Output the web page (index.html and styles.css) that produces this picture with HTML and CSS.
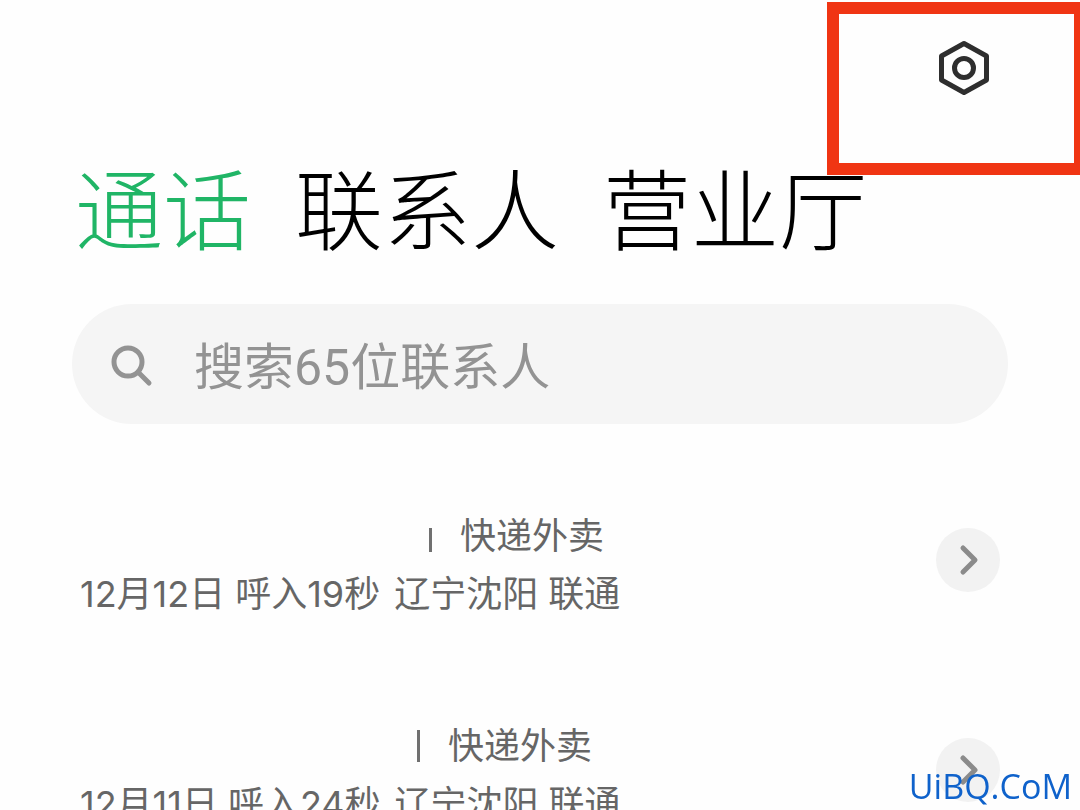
FILE: index.html
```
<!doctype html>
<html lang="zh-CN">
<head>
    <meta charset="UTF-8">
    <meta name="viewport" content="width=device-width, initial-scale=1.0">
    <title>通话</title>
    <link rel="stylesheet" href="styles.css">
</head>
<body>
<div class="page">
    <header class="topbar">
        <button class="settings" type="button" aria-label="设置">
            <svg width="54" height="58" viewBox="0 0 54 58">
                <path d="M27 4.500 L49.500 17 V41 L27 53.500 L4.500 41 V17 Z"></path>
                <circle cx="27" cy="29" r="9.500"></circle>
            </svg>
        </button>
    </header>
    <nav class="tabs">
        <a class="active" href="#calls">通话</a>
        <a href="#contacts">联系人</a>
        <a href="#hall">营业厅</a>
    </nav>
    <label class="search">
        <svg width="44" height="44" viewBox="0 0 44 44">
            <circle cx="18" cy="18" r="14"></circle>
            <path d="M28 28 L39 39"></path>
        </svg>
        <input type="text" placeholder="搜索65位联系人" aria-label="搜索联系人">
    </label>
    <ul class="calls" id="calls">
        <li class="call">
            <div class="info">
                <div class="tag"><span class="bar short"></span><span>快递外卖</span></div>
                <div class="meta">
                    <span>12月12日</span>
                    <span>呼入19秒</span>
                    <span class="place">辽宁沈阳</span>
                    <span>联通</span>
                </div>
            </div>
            <button class="more" type="button" aria-label="详情">
                <svg width="64" height="64" viewBox="0 0 64 64"><path d="M27 20 L39 32 L27 44"></path></svg>
            </button>
        </li>
        <li class="call">
            <div class="info">
                <div class="tag second"><span class="bar"></span><span>快递外卖</span></div>
                <div class="meta">
                    <span>12月11日</span>
                    <span>呼入24秒</span>
                    <span class="place">辽宁沈阳</span>
                    <span>联通</span>
                </div>
            </div>
            <button class="more" type="button" aria-label="详情">
                <svg width="64" height="64" viewBox="0 0 64 64"><path d="M27 20 L39 32 L27 44"></path></svg>
            </button>
        </li>
    </ul>
</div>
<div class="highlight"></div>
<div class="watermark">UiBQ.CoM</div>
</body>
</html>
```

FILE: styles.css
```
* {
    box-sizing: border-box;
}

body {
    margin: 0;
    height: 100vh;
    overflow: hidden;
    background: #fefefe;
    font-family: Inter, "Noto Sans CJK SC", sans-serif;
    color: #666;
}

button {
    padding: 0;
    border: none;
    background: none;
    cursor: pointer;
}

svg {
    display: block;
    fill: none;
    stroke-linecap: round;
    stroke-linejoin: round;
}

.page {
    padding: 0 72px;
}

.topbar {
    display: flex;
    justify-content: flex-end;
    height: 146px;
    padding: 39px 17px 0 0;
}

.settings {
    height: 58px;
}

.settings svg {
    stroke: #2e2e2e;
    stroke-width: 5;
}

.tabs {
    display: flex;
    gap: 44px;
    padding-left: 3px;
    font-size: 88px;
    font-weight: 300;
    line-height: 130px;
    white-space: nowrap;
}

.tabs a {
    color: #000;
    text-decoration: none;
}

.tabs .active {
    color: #20b566;
}

.search {
    display: flex;
    align-items: center;
    gap: 40px;
    height: 120px;
    margin-top: 28px;
    padding: 4px 40px 0 38px;
    border-radius: 60px;
    background: #f5f5f5;
}

.search svg {
    flex: none;
    stroke: #939393;
    stroke-width: 5;
}

.search input {
    flex: 1;
    min-width: 0;
    padding: 4px 0 0;
    border: none;
    outline: none;
    background: none;
    font: 50px/72px Roboto, "Noto Sans CJK SC", sans-serif;
    color: #666;
}

.search input::placeholder {
    color: #939393;
    opacity: 1;
}

.calls {
    margin: 0;
    padding: 83px 8px 0;
    list-style: none;
}

.call {
    display: flex;
    align-items: flex-start;
    justify-content: space-between;
    height: 116px;
    margin-bottom: 94px;
    font-size: 36px;
    line-height: 58px;
    white-space: nowrap;
}

.tag {
    display: flex;
    align-items: center;
    gap: 28px;
    padding-left: 349px;
}

.tag.second {
    padding-left: 337px;
}

.bar {
    width: 3px;
    height: 32px;
    background: #707070;
}

.bar.short {
    height: 24px;
    margin-top: 8px;
}

.meta {
    display: flex;
    gap: 10px;
}

.meta .place {
    margin-left: 4px;
}

.more {
    margin-top: 21px;
    border-radius: 50%;
    background: #f2f2f2;
}

.more svg {
    stroke: #8b8b8b;
    stroke-width: 5;
}

/* marks the settings button */
.highlight {
    position: absolute;
    top: 2px;
    right: 0;
    width: 253px;
    height: 173px;
    border: solid #f03513;
    border-width: 12px 6px 12px 12px;
    pointer-events: none;
}

.watermark {
    position: fixed;
    right: 8px;
    bottom: 4px;
    font: 34px/40px "Open Sans", sans-serif;
    color: #0f62cb;
}
```
